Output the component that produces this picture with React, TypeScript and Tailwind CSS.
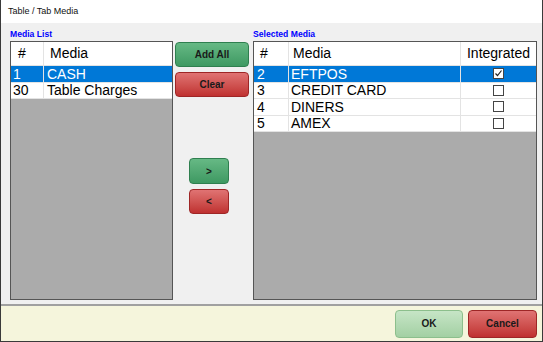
const leftRows = [
  { n: '1', name: 'CASH', sel: true },
  { n: '30', name: 'Table Charges', sel: false },
]

const rightRows = [
  { n: '2', name: 'EFTPOS', on: true, sel: true },
  { n: '3', name: 'CREDIT CARD', on: false, sel: false },
  { n: '4', name: 'DINERS', on: false, sel: false },
  { n: '5', name: 'AMEX', on: false, sel: false },
]

const font = { fontFamily: '"Liberation Sans", Arial, sans-serif' }

function Check({ on }: { on: boolean }) {
  return (
    <span className="w-[11px] h-[11px] border border-[#444] bg-white flex items-center justify-center">
      {on && (
        <svg width="9" height="9" viewBox="0 0 9 9">
          <path d="M1.5 4.5 L3.5 6.5 L7.5 1.5" stroke="#222" strokeWidth="1.2" fill="none" />
        </svg>
      )}
    </span>
  )
}

function Btn({ label, tone, className }: { label: string; tone: 'green' | 'red' | 'pale'; className: string }) {
  const tones = {
    green: 'bg-gradient-to-b from-[#66b985] to-[#3e9962] border-[#2f7f4f]',
    red: 'bg-gradient-to-b from-[#e07373] to-[#bf3030] border-[#9e2626]',
    pale: 'bg-gradient-to-b from-[#c6e5c6] to-[#a3d0a3] border-[#8cbf8c]',
  }
  return (
    <button
      className={`${className} ${tones[tone]} border rounded-[4px] flex items-center justify-center text-[10px] font-bold text-[#1a1a1a]`}
      style={font}
    >
      {label}
    </button>
  )
}

export default function App() {
  return (
    <div className="w-[543px] h-[342px] flex flex-col bg-[#f0f0f0] border-x border-b border-[#3a3a3a]" style={font}>
      <div className="h-[23px] bg-white flex items-center pl-[7px] text-[9px] text-[#111]">Table / Tab Media</div>

      <div className="flex flex-1 pl-[9px] pr-[3px]">
        {/* media list */}
        <div className="w-[163px] flex flex-col">
          <div className="h-[18px] flex items-end pb-[2px] text-[8.6px] leading-[10px] font-bold text-[#0000ff]">Media List</div>
          <div className="h-[259px] border border-[#555] bg-[#ababab] flex flex-col">
            <div className="h-[24px] bg-white flex border-b border-[#e3e3e3] text-[14px] text-black">
              <div className="w-[33px] pl-[7px] flex items-center border-r border-[#e3e3e3]">#</div>
              <div className="flex-1 pl-[6px] flex items-center">Media</div>
            </div>
            {leftRows.map((r) => (
              <div
                key={r.n}
                className={`h-[16.5px] flex text-[14px] leading-none border-b border-[#e3e3e3] ${r.sel ? 'bg-[#0078d7] text-white' : 'bg-white text-black'}`}
              >
                <div className="w-[33px] pl-[2px] flex items-center border-r border-[#e3e3e3]">{r.n}</div>
                <div className="flex-1 pl-[3px] flex items-center">{r.name}</div>
              </div>
            ))}
          </div>
        </div>

        {/* buttons */}
        <div className="w-[74px] ml-[2px] flex flex-col">
          <Btn label="Add All" tone="green" className="mt-[19px] h-[25px] w-full" />
          <Btn label="Clear" tone="red" className="mt-[5px] h-[25px] w-full" />
          <Btn label=">" tone="green" className="mt-[61px] ml-[14px] h-[26px] w-[40px]" />
          <Btn label="<" tone="red" className="mt-[5px] ml-[14px] h-[25px] w-[40px]" />
        </div>

        {/* selected media */}
        <div className="w-[284px] ml-[4px] flex flex-col">
          <div className="h-[18px] flex items-end pb-[2px] text-[8.6px] leading-[10px] font-bold text-[#0000ff]">Selected Media</div>
          <div className="h-[259px] border border-[#555] bg-[#ababab] flex flex-col">
            <div className="h-[24px] bg-white flex border-b border-[#e3e3e3] text-[14px] text-black">
              <div className="w-[35px] pl-[6px] flex items-center border-r border-[#e3e3e3]">#</div>
              <div className="w-[172px] pl-[4px] flex items-center border-r border-[#e3e3e3]">Media</div>
              <div className="flex-1 flex items-center justify-center">Integrated</div>
            </div>
            {rightRows.map((r) => (
              <div
                key={r.n}
                className={`h-[16.5px] flex text-[14px] leading-none border-b border-[#e3e3e3] ${r.sel ? 'bg-[#0078d7] text-white' : 'bg-white text-black'}`}
              >
                <div className="w-[35px] pl-[3px] flex items-center border-r border-[#e3e3e3]">{r.n}</div>
                <div className="w-[172px] pl-[2px] flex items-center border-r border-[#e3e3e3]">{r.name}</div>
                <div className="flex-1 flex items-center justify-center">
                  <Check on={r.on} />
                </div>
              </div>
            ))}
          </div>
        </div>
      </div>

      <div className="h-[37px] border-t-2 border-[#a0a0a0] bg-[#f5f5dc] flex items-center justify-end gap-[5px] pr-[5px]">
        <Btn label="OK" tone="pale" className="w-[68px] h-[28px]" />
        <Btn label="Cancel" tone="red" className="w-[69px] h-[28px]" />
      </div>
    </div>
  )
}
